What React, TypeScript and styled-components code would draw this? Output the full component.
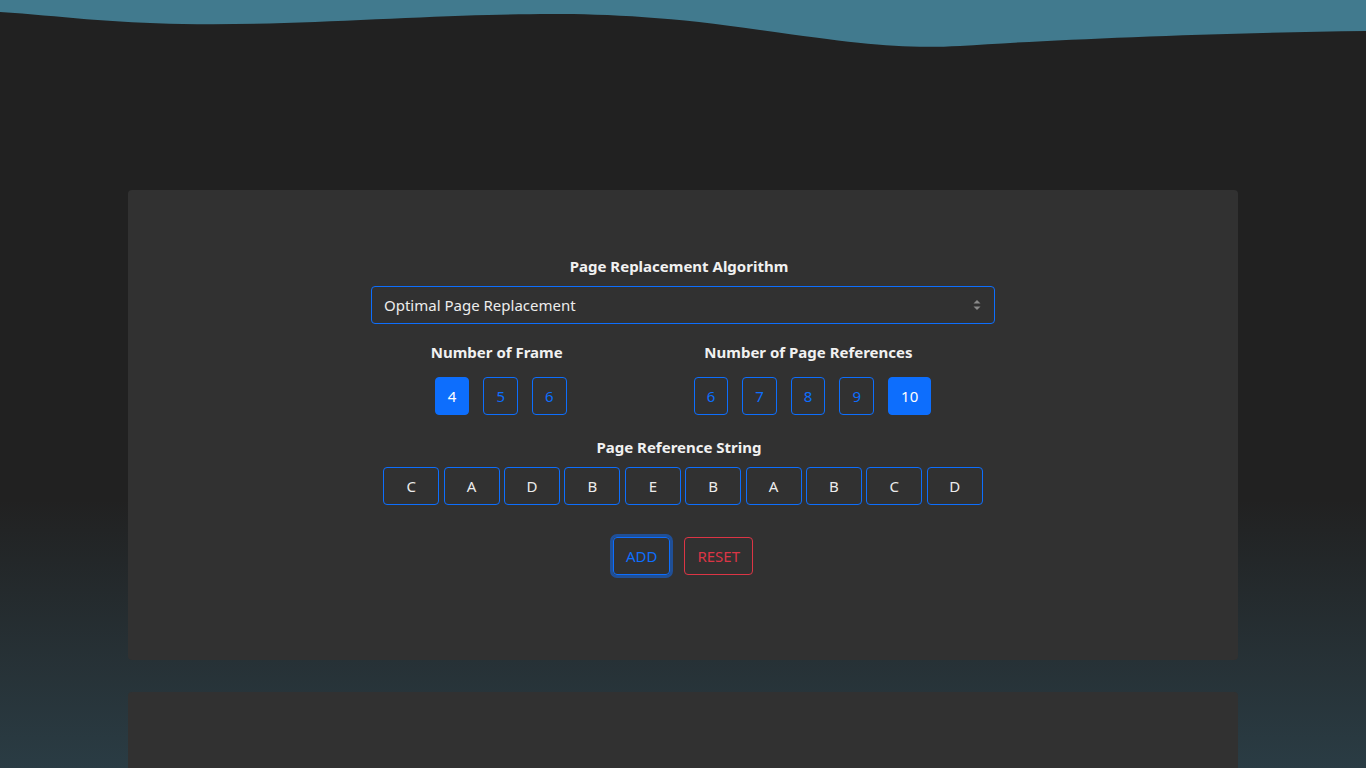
import React from "react";
import styled, { createGlobalStyle } from "styled-components";

const Global = createGlobalStyle`
  html, body { margin: 0; padding: 0; height: 100%; }
  body {
    font-family: "Noto Sans", "Open Sans", Arial, sans-serif;
    color: #e9e9e9;
    background: #212121;
    overflow: hidden;
  }
  * { box-sizing: border-box; }
`;

const Page = styled.div`
  height: 100vh;
  overflow: hidden;
  background: linear-gradient(to bottom, #212121 0px, #212121 500px, #2a3c44 768px);
  display: flex;
  flex-direction: column;
  align-items: center;
`;

const Wave = styled.svg`
  display: block;
  width: 100%;
  height: 50px;
  flex: none;
`;

const Card = styled.section<{ $h?: number }>`
  width: 1110px;
  flex: none;
  background: #313131;
  border-radius: 4px;
  margin-top: ${(p) => (p.$h ? 32 : 140)}px;
  height: ${(p) => p.$h ?? 470}px;
  padding-top: 64px;
  display: flex;
  flex-direction: column;
  align-items: center;
`;

const Label = styled.div`
  font-weight: 700;
  font-size: 15px;
  line-height: 24px;
  color: #f1f1f1;
  text-align: center;
  padding-right: 8px;
`;

const SelectBox = styled.div`
  margin-top: 8px;
  width: 624px;
  height: 38px;
  border: 1px solid #0d6efd;
  border-radius: 4px;
  display: flex;
  align-items: center;
  justify-content: space-between;
  padding: 0 12px;
  font-size: 15px;
  color: #ececec;
`;

const Row = styled.div`
  margin-top: 16px;
  display: flex;
  justify-content: center;
  gap: 123px;
  padding-right: 4px;
`;

const Group = styled.div`
  display: flex;
  flex-direction: column;
  align-items: center;
`;

const ChoiceRow = styled.div`
  margin-top: 13px;
  display: flex;
  gap: 14px;
`;

const Choice = styled.button<{ $active?: boolean }>`
  height: 38px;
  min-width: 34px;
  padding: 0 12px;
  border-radius: 4px;
  border: 1px solid #0d6efd;
  background: ${(p) => (p.$active ? "#0d6efd" : "transparent")};
  color: ${(p) => (p.$active ? "#ffffff" : "#0d6efd")};
  font-family: inherit;
  font-size: 15px;
  cursor: pointer;
`;

const RefSection = styled.div`
  margin-top: 20px;
  display: flex;
  flex-direction: column;
  align-items: center;
`;

const RefRow = styled.div`
  margin-top: 8px;
  display: flex;
  gap: 4.4px;
`;

const RefCell = styled.div`
  width: 56px;
  height: 38px;
  border: 1px solid #0d6efd;
  border-radius: 4px;
  display: flex;
  align-items: center;
  justify-content: center;
  font-size: 15px;
  color: #ececec;
`;

const Actions = styled.div`
  margin-top: 32px;
  display: flex;
  gap: 14px;
`;

const ActionBtn = styled.button<{ $tone: "blue" | "red"; $focus?: boolean }>`
  height: 38px;
  padding: 0 12px;
  border-radius: 4px;
  background: transparent;
  font-family: inherit;
  font-size: 15px;
  border: 1px solid ${(p) => (p.$tone === "blue" ? "#0d6efd" : "#dc3545")};
  color: ${(p) => (p.$tone === "blue" ? "#0d6efd" : "#dc3545")};
  box-shadow: ${(p) => (p.$focus ? "0 0 0 3px rgba(13,110,253,0.5)" : "none")};
  cursor: pointer;
`;

const frames = [4, 5, 6];
const refsCount = [6, 7, 8, 9, 10];
const refString = ["C", "A", "D", "B", "E", "B", "A", "B", "C", "D"];

export default function App() {
  return (
    <>
      <Global />
      <Page>
        <Wave viewBox="0 0 1366 50" preserveAspectRatio="none">
          <path
            d="M0 0 H1366 V31 C1200 33 1050 40 960 46 C900 49 860 44 760 30 C640 12 560 13 488 15 C400 17 280 26 183 24 C110 23 60 16 0 12 Z"
            fill="#417a8e"
          />
        </Wave>
        <Card>
          <Label>Page Replacement Algorithm</Label>
          <SelectBox>
            <span>Optimal Page Replacement</span>
            <svg width="10" height="14" viewBox="0 0 10 14">
              <path d="M1.5 5.5 L5 2 L8.5 5.5 Z" fill="#8a8a8a" />
              <path d="M1.5 8.5 L5 12 L8.5 8.5 Z" fill="#8a8a8a" />
            </svg>
          </SelectBox>
          <Row>
            <Group>
              <Label>Number of Frame</Label>
              <ChoiceRow>
                {frames.map((f) => (
                  <Choice key={f} $active={f === 4}>
                    {f}
                  </Choice>
                ))}
              </ChoiceRow>
            </Group>
            <Group>
              <Label>Number of Page References</Label>
              <ChoiceRow>
                {refsCount.map((n) => (
                  <Choice key={n} $active={n === 10}>
                    {n}
                  </Choice>
                ))}
              </ChoiceRow>
            </Group>
          </Row>
          <RefSection>
            <Label>Page Reference String</Label>
            <RefRow>
              {refString.map((c, i) => (
                <RefCell key={i}>{c}</RefCell>
              ))}
            </RefRow>
          </RefSection>
          <Actions>
            <ActionBtn $tone="blue" $focus>
              ADD
            </ActionBtn>
            <ActionBtn $tone="red">RESET</ActionBtn>
          </Actions>
        </Card>
        <Card $h={300} />
      </Page>
    </>
  );
}
